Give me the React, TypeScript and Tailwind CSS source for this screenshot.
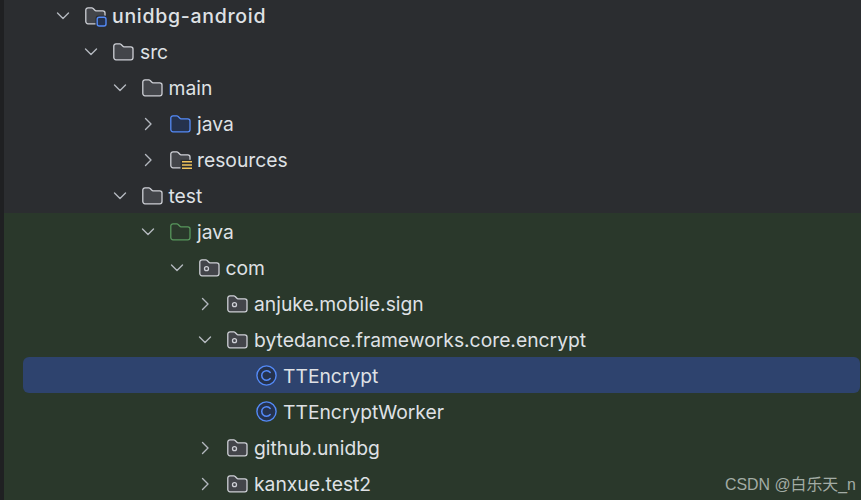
import React from "react";

const FONT = "font-['Inter','Noto_Sans',sans-serif]";

function Chevron({ open }: { open: boolean }) {
  return (
    <svg width="14" height="14" viewBox="0 0 14 14" fill="none" stroke="#b4b8bf" strokeWidth="1.4" strokeLinecap="round" strokeLinejoin="round" className="mt-[-1px] ml-[-1px]">
      {open ? <path d="M1.5 4 L7 9.5 L12.5 4" /> : <path d="M4.5 1.5 L10 7 L4.5 12.5" />}
    </svg>
  );
}

const folderPath = "M0.8 3 a2.2 2.2 0 0 1 2.2-2.2 h3.8 a1.6 1.6 0 0 1 1.1.5 l2 2 a1.6 1.6 0 0 0 1.1.5 h6.8 a2.2 2.2 0 0 1 2.2 2.2 v8.6 a2.2 2.2 0 0 1-2.2 2.2 H3 a2.2 2.2 0 0 1-2.2-2.2 Z";

function Folder({ kind }: { kind: string }) {
  const stroke = kind === "blue" ? "#548af7" : kind === "green" ? "#57965c" : "#ced0d6";
  const fill = kind === "blue" ? "#25324d" : kind === "green" ? "transparent" : "#43454a";
  return (
    <svg width="21" height="17" viewBox="0 0 21 17" className="overflow-visible mt-[-1px]">
      <path d={folderPath} fill={fill} stroke={stroke} strokeWidth="1.3" />
      {kind === "package" && <circle cx="7.5" cy="9.7" r="2" fill="none" stroke="#ced0d6" strokeWidth="1.3" />}
      {kind === "module" && (
        <g>
          <rect x="10.5" y="8.5" width="12" height="12" rx="3" fill="#2b2d30" />
          <rect x="12.2" y="10.2" width="8.8" height="8.8" rx="2" fill="#25324d" stroke="#548af7" strokeWidth="1.4" />
        </g>
      )}
      {kind === "resources" && (
        <g>
          <rect x="10.5" y="8.8" width="12" height="10.5" fill="#2b2d30" />
          <path d="M12 10.8 H22 M12 14 H22 M12 17.2 H22" stroke="#f2c55c" strokeWidth="1.5" />
        </g>
      )}
    </svg>
  );
}

function ClassIcon() {
  return (
    <svg width="21" height="21" viewBox="0 0 21 21" fill="none" className="mt-[-2px]">
      <circle cx="10.5" cy="10.5" r="9.6" fill="#25324d" stroke="#548af7" strokeWidth="1.4" />
      <path d="M14.2 7.4 A4.8 4.8 0 1 0 14.2 13.6" stroke="#548af7" strokeWidth="1.5" strokeLinecap="round" />
    </svg>
  );
}

function Row({ pad, open, kind, label, bold }: { pad: string; open?: boolean; kind: string; label: string; bold?: boolean }) {
  return (
    <div className={`h-9 shrink-0 flex items-center ${pad}`}>
      <span className="w-[28px] flex justify-start shrink-0">
        {open !== undefined && <Chevron open={open} />}
      </span>
      <span className="w-[27px] h-[21px] flex items-center shrink-0">
        {kind === "class" ? <ClassIcon /> : <Folder kind={kind} />}
      </span>
      <span className={`mt-[2px] leading-none whitespace-nowrap text-[#dfe1e5] ${bold ? "text-[19.5px] font-medium tracking-[0.7px]" : "text-[19.3px] font-normal"}`}>{label}</span>
    </div>
  );
}

export default function App() {
  return (
    <div className={`relative w-[861px] h-[500px] overflow-hidden flex bg-[#2b2d30] ${FONT}`}>
      <div className="w-1 shrink-0 bg-[#1f2022]" />
      <div className="flex-1 min-w-0 flex flex-col mt-[-2px]">
        <Row pad="pl-[53px]" open kind="module" label="unidbg-android" bold />
        <Row pad="pl-[81px]" open kind="plain" label="src" />
        <Row pad="pl-[109.5px]" open kind="plain" label="main" />
        <Row pad="pl-[138px]" open={false} kind="blue" label="java" />
        <Row pad="pl-[138px]" open={false} kind="resources" label="resources" />
        <Row pad="pl-[109.5px]" open kind="plain" label="test" />
        <div className="flex-1 flex flex-col bg-[#2a382b] mt-[-1px] [&_.h-9]:pt-[2px]">
          <Row pad="pl-[138px]" open kind="green" label="java" />
          <Row pad="pl-[166.5px]" open kind="package" label="com" />
          <Row pad="pl-[195px]" open={false} kind="package" label="anjuke.mobile.sign" />
          <Row pad="pl-[195px]" open kind="package" label="bytedance.frameworks.core.encrypt" />
          <div className="ml-[19px] mr-px rounded-[6px] bg-[#2e436e]">
            <Row pad="pl-[205px]" kind="class" label="TTEncrypt" />
          </div>
          <Row pad="pl-[224px]" kind="class" label="TTEncryptWorker" />
          <Row pad="pl-[195px]" open={false} kind="package" label="github.unidbg" />
          <Row pad="pl-[195px]" open={false} kind="package" label="kanxue.test2" />
        </div>
      </div>
      <div className="absolute left-[725px] top-[475px] text-[15.9px] leading-[19px] text-[#a3aca5] whitespace-nowrap font-['Liberation_Sans','Noto_Sans_CJK_SC',sans-serif]">
        CSDN @白乐天_n
      </div>
    </div>
  );
}
